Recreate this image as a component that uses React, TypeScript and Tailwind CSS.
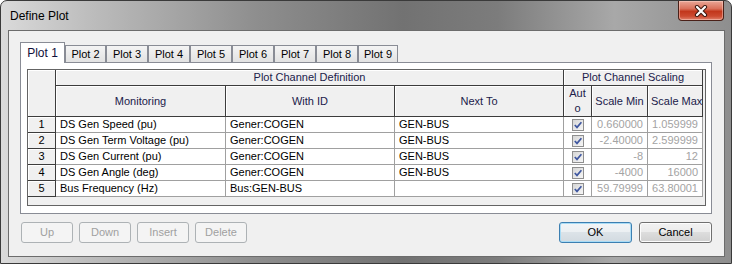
import React from "react";

interface ChannelRow {
  n: number;
  monitoring: string;
  withId: string;
  nextTo: string;
  min: string;
  max: string;
}

const rows: ChannelRow[] = [
  { n: 1, monitoring: "DS Gen Speed (pu)", withId: "Gener:COGEN", nextTo: "GEN-BUS", min: "0.660000", max: "1.059999" },
  { n: 2, monitoring: "DS Gen Term Voltage (pu)", withId: "Gener:COGEN", nextTo: "GEN-BUS", min: "-2.40000", max: "2.599999" },
  { n: 3, monitoring: "DS Gen Current (pu)", withId: "Gener:COGEN", nextTo: "GEN-BUS", min: "-8", max: "12" },
  { n: 4, monitoring: "DS Gen Angle (deg)", withId: "Gener:COGEN", nextTo: "GEN-BUS", min: "-4000", max: "16000" },
  { n: 5, monitoring: "Bus Frequency (Hz)", withId: "Bus:GEN-BUS", nextTo: "", min: "59.79999", max: "63.80001" },
];

const tabs = ["Plot 1", "Plot 2", "Plot 3", "Plot 4", "Plot 5", "Plot 6", "Plot 7", "Plot 8", "Plot 9"];

export default function App() {
  return (
    <div className="w-[732px] h-[264px] font-['Liberation_Sans',Arial,sans-serif] text-[11px] text-black">
      <div className="flex h-full w-full flex-col rounded-t-[7px] border border-[#3a3a3a] bg-[linear-gradient(90deg,#dadada_0%,#bdbdbd_12%,#8e8e8e_35%,#727272_55%,#7c7c7c_68%,#a8a8a8_84%,#8e8e8e_100%)]">
        {/* title bar */}
        <div className="flex h-[29px] items-start justify-between">
          <span className="pl-[9px] pt-[7px] text-[12px] leading-[16px]">Define Plot</span>
          <CloseButton />
        </div>

        {/* client area */}
        <div className="ml-[7px] mr-[6px] mb-[6px] flex flex-1 flex-col border border-[#6c6c6c] bg-[#f0f0f0] pl-[11px] pt-[11px]">
          <div className="flex h-[20px] items-end">
            {tabs.map((t, i) => (
              <Tab key={t} label={t} active={i === 0} width={i === 0 ? 45 : i === 1 ? 41 : i === 8 ? 40 : 42} />
            ))}
          </div>

          <div className="h-[152px] w-[692px] border border-[#898c95] bg-white pl-[6px] pt-[6px]">
            <ChannelGrid />
          </div>

          <div className="mt-[8px] flex w-[692px] justify-between">
            <div className="ml-px flex gap-[6px]">
              <Btn label="Up" disabled />
              <Btn label="Down" disabled />
              <Btn label="Insert" disabled />
              <Btn label="Delete" disabled />
            </div>
            <div className="flex gap-[7px]">
              <Btn label="OK" primary wide />
              <Btn label="Cancel" wide />
            </div>
          </div>
        </div>
      </div>
    </div>
  );
}

function CloseButton() {
  return (
    <div className="mr-[7px] flex h-[20px] w-[46px] items-center justify-center rounded-b-[4px] border border-t-0 border-[#4a2018] bg-[linear-gradient(#e9a797_0%,#d9715b_40%,#c2371c_55%,#cc4a30_80%,#e0826c_100%)] shadow-[inset_0_0_0_1px_rgba(255,220,210,0.45)]">
      <svg width="14" height="12" viewBox="0 0 14 12">
        <path d="M3 2 L11 10 M11 2 L3 10" stroke="#3c1810" strokeWidth="4.2" strokeLinecap="round" />
        <path d="M3 2 L11 10 M11 2 L3 10" stroke="#ffffff" strokeWidth="2.2" strokeLinecap="round" />
      </svg>
    </div>
  );
}

function Tab({ label, active, width }: { label: string; active?: boolean; width: number }) {
  if (active) {
    return (
      <div
        style={{ width }}
        className="relative z-10 -mb-px flex h-[21px] shrink-0 items-center justify-center border border-b-0 border-[#898c95] bg-white text-[12px] text-[#10103a]"
      >
        {label}
      </div>
    );
  }
  return (
    <div
      style={{ width }}
      className="flex h-[17px] shrink-0 items-center justify-center border border-b-0 border-[#898c95] bg-[linear-gradient(#f4f4f4,#e2e2e2)] text-[11px] text-black"
    >
      {label}
    </div>
  );
}

const hdr =
  "flex items-center justify-center border-r border-b border-[#3c3c3c] bg-[#f0f0f0] shadow-[inset_1px_1px_0_#ffffff] text-[#20204a] overflow-hidden whitespace-nowrap";
const cell = "flex items-center border-r border-b border-[#a0a0a0] bg-white overflow-hidden whitespace-nowrap";

function ChannelGrid() {
  return (
    <div className="h-[137px] w-[679px] border border-[#646464] bg-[#f0f0f0]">
      <div className="grid grid-cols-[28px_170px_169px_169px_28px_56px_55px] grid-rows-[16px_31px_repeat(5,16px)]">
        <div className={`${hdr} row-span-2`} />
        <div className={`${hdr} col-span-3`}>Plot Channel Definition</div>
        <div className={`${hdr} col-span-3`}>Plot Channel Scaling</div>

        <div className={hdr}>Monitoring</div>
        <div className={hdr}>With ID</div>
        <div className={hdr}>Next To</div>
        <div className={`${hdr} flex-col leading-[15px]`}>
          <span>Aut</span>
          <span>o</span>
        </div>
        <div className={hdr}>Scale Min</div>
        <div className={`${hdr} justify-start pl-[3px]`}>Scale Max</div>

        {rows.map((r) => (
          <React.Fragment key={r.n}>
            <div className="flex items-center justify-center border-r border-b border-[#3c3c3c] bg-[#f0f0f0] shadow-[inset_1px_1px_0_#ffffff]">
              {r.n}
            </div>
            <div className={`${cell} pl-[4px]`}>{r.monitoring}</div>
            <div className={`${cell} pl-[4px]`}>{r.withId}</div>
            <div className={`${cell} pl-[4px]`}>{r.nextTo}</div>
            <div className={`${cell} justify-center`}>
              <CheckBox />
            </div>
            <div className={`${cell} justify-end pr-[4px] text-[#a3a3a3]`}>{r.min}</div>
            <div className={`${cell} justify-end pr-[4px] text-[#a3a3a3]`}>{r.max}</div>
          </React.Fragment>
        ))}
      </div>
    </div>
  );
}

function CheckBox() {
  return (
    <span className="flex h-[12px] w-[12px] items-center justify-center border border-[#8f8f8f] bg-[linear-gradient(135deg,#d6d6d6,#f6f6f6)]">
      <svg width="10" height="10" viewBox="0 0 10 10">
        <path d="M1.8 5 L4 7.4 L8.4 2.2" fill="none" stroke="#3f57a0" strokeWidth="1.7" />
      </svg>
    </span>
  );
}

function Btn({ label, disabled, primary, wide }: { label: string; disabled?: boolean; primary?: boolean; wide?: boolean }) {
  const size = wide ? "w-[73px]" : "w-[52px]";
  if (disabled) {
    return (
      <div className={`${size} flex h-[21px] items-center justify-center rounded-[3px] border border-[#adb2b5] bg-[#f4f4f4] text-[#a0a0a0]`}>
        {label}
      </div>
    );
  }
  if (primary) {
    return (
      <div className={`${size} flex h-[21px] items-center justify-center rounded-[3px] border border-[#3c7fb1] bg-[linear-gradient(#f2f5f7_0%,#ebeff2_50%,#dce3e8_50%,#d2dae0_100%)] shadow-[inset_0_0_0_1px_#a9dcf6]`}>
        {label}
      </div>
    );
  }
  return (
    <div className={`${size} flex h-[21px] items-center justify-center rounded-[3px] border border-[#707070] bg-[linear-gradient(#f2f2f2_0%,#ebebeb_50%,#dddddd_50%,#cfcfcf_100%)] shadow-[inset_0_0_0_1px_#fcfcfc]`}>
      {label}
    </div>
  );
}
